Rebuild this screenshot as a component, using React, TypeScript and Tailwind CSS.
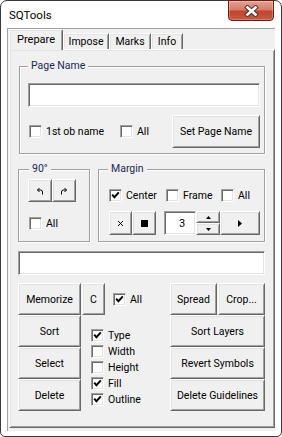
import React from "react";

const raised =
  "bg-[#f0f0f0] border border-t-white border-l-white border-r-[#696969] border-b-[#696969] shadow-[inset_1px_1px_0_#e3e3e3,inset_-1px_-1px_0_#a0a0a0]";
const sunken =
  "bg-white border border-t-[#a0a0a0] border-l-[#a0a0a0] border-r-white border-b-white shadow-[inset_1px_1px_0_#696969,inset_-1px_-1px_0_#e3e3e3]";

function Btn({ className = "", children }: { className?: string; children?: React.ReactNode }) {
  return (
    <div className={`${raised} flex items-center justify-center shrink-0 leading-[13px] ${className}`}>
      {children}
    </div>
  );
}

function Check({ checked = false, label, className = "" }: { checked?: boolean; label: string; className?: string }) {
  return (
    <div className={`flex items-center gap-[4px] h-[13px] shrink-0 ${className}`}>
      <span className={`w-[13px] h-[13px] shrink-0 ${sunken} flex items-center justify-center`}>
        {checked && (
          <svg width="9" height="9" viewBox="0 0 9 9">
            <path d="M1.2 3.6 L3.4 6.2 L7.8 1.4" stroke="#000" strokeWidth="1.9" fill="none" />
          </svg>
        )}
      </span>
      <span className="leading-[13px] whitespace-nowrap">{label}</span>
    </div>
  );
}

function Group({
  label,
  className = "",
  labelClass = "",
  children,
}: {
  label: string;
  className?: string;
  labelClass?: string;
  children?: React.ReactNode;
}) {
  return (
    <div className={`border border-[#a0a0a0] shadow-[inset_1px_1px_0_#fff,1px_1px_0_#fff] shrink-0 ${className}`}>
      <div className={`-mt-[8px] h-[13px] leading-[13px] px-[3px] bg-[#f0f0f0] w-fit text-[#1b2a55] ${labelClass}`}>
        {label}
      </div>
      {children}
    </div>
  );
}

function CloseBtn() {
  return (
    <div className="ml-auto mr-[7px] -mt-[1px] w-[46px] h-[21px] rounded-b-[4px] border border-[#6b1d12] bg-[linear-gradient(180deg,#e6a294_0%,#d67c6a_45%,#c4432e_55%,#c85a43_100%)] flex items-center justify-center shadow-[inset_0_0_0_1px_rgba(255,255,255,0.25)]">
      <svg width="15" height="12" viewBox="0 0 15 12">
        <path d="M3.5 2.5 L11.5 9.5 M11.5 2.5 L3.5 9.5" stroke="#4b3a36" strokeWidth="4.6" strokeLinecap="square" fill="none" />
        <path d="M3.5 2.5 L11.5 9.5 M11.5 2.5 L3.5 9.5" stroke="#ffffff" strokeWidth="2.6" strokeLinecap="square" fill="none" />
      </svg>
    </div>
  );
}

function RotL({ flip = false }: { flip?: boolean }) {
  return (
    <svg width="8" height="8" viewBox="0 0 8 8" style={flip ? { transform: "scaleX(-1)" } : undefined}>
      <path d="M1.5 3 H4.5 Q6.5 3 6.5 5 V7.5" stroke="#000" strokeWidth="1" fill="none" />
      <path d="M3.5 1 L1.5 3 L3.5 5" stroke="#000" strokeWidth="1" fill="none" />
    </svg>
  );
}

export default function App() {
  return (
    <div className="w-[282px] h-[437px] bg-white font-[Roboto,'Liberation_Sans',sans-serif] text-[10.5px] text-black">
      <div className="w-[282px] h-[437px] border border-[#3a3a3a] rounded-t-[7px] rounded-b-[5px] bg-white flex flex-col">
        {/* Title bar */}
        <div className="h-[27px] flex items-start shrink-0">
          <div className="ml-[8px] mt-[6px] text-[11.5px] leading-[16px]">SQTools</div>
          <CloseBtn />
        </div>

        {/* Client */}
        <div className="mx-[6px] h-[403px] shrink-0 bg-[#f0f0f0] border-l border-t border-[#a0a0a0] pl-[1px] pb-[3px] flex flex-col">
          {/* Tabs */}
          <div className="h-[20px] flex items-end shrink-0">
            <div className="relative z-10 -mb-[1px] w-[54px] h-[21px] bg-[#f0f0f0] border-t border-l border-white border-r border-r-[#696969] shadow-[inset_1px_1px_0_#e3e3e3,inset_-1px_0_0_#a0a0a0] rounded-tr-[2px] flex items-start justify-center pt-[3px] leading-[13px] text-[11px]">
              Prepare
            </div>
            <div className="w-[46px] h-[16px] bg-[#f0f0f0] border-t border-l border-white border-r border-r-[#696969] shadow-[inset_1px_1px_0_#e3e3e3,inset_-1px_0_0_#a0a0a0] flex items-start justify-center pt-[1px] leading-[13px]">
              Impose
            </div>
            <div className="w-[42px] h-[16px] bg-[#f0f0f0] border-t border-l border-white border-r border-r-[#696969] shadow-[inset_1px_1px_0_#e3e3e3,inset_-1px_0_0_#a0a0a0] flex items-start justify-center pt-[1px] leading-[13px]">
              Marks
            </div>
            <div className="w-[32px] h-[16px] bg-[#f0f0f0] border-t border-l border-white border-r border-r-[#696969] shadow-[inset_1px_1px_0_#e3e3e3,inset_-1px_0_0_#a0a0a0] flex items-start justify-center pt-[1px] leading-[13px]">
              Info
            </div>
          </div>

          {/* Panel */}
          <div className={`flex-1 ${raised} flex flex-col`}>
            {/* Page Name */}
            <Group label="Page Name" className="mt-[16px] ml-[9px] w-[246px] pb-[5px]" labelClass="ml-[8px]">
              <div className={`mt-[11px] ml-[8px] w-[232px] h-[24px] ${sunken}`} />
              <div className="mt-[8px] ml-[8px] w-[232px] h-[33px] flex items-center">
                <Check label="1st ob name" className="ml-[1px] w-[91px]" />
                <Check label="All" />
                <Btn className="ml-auto w-[88px] h-[33px]">Set Page Name</Btn>
              </div>
            </Group>

            {/* 90 / Margin */}
            <div className="mt-[15px] ml-[8px] flex gap-[8px]">
              <Group label="90°" className="w-[72px] h-[73px]" labelClass="ml-[10px]">
                <div className="mt-[4px] ml-[9px] flex">
                  <Btn className="w-[24px] h-[23px]">
                    <RotL />
                  </Btn>
                  <Btn className="w-[24px] h-[23px]">
                    <RotL flip />
                  </Btn>
                </div>
                <Check label="All" className="mt-[15px] ml-[10px]" />
              </Group>
              <Group label="Margin" className="w-[167px] h-[73px]" labelClass="ml-[9px]">
                <div className="mt-[14px] ml-[10px] flex">
                  <Check checked label="Center" className="w-[57px]" />
                  <Check label="Frame" className="w-[55px]" />
                  <Check label="All" />
                </div>
                <div className="mt-[9px] ml-[10px] flex">
                  <Btn className="w-[23px] h-[24px]">
                    <svg width="7" height="7" viewBox="0 0 7 7">
                      <path d="M1 1 L6 6 M6 1 L1 6" stroke="#000" strokeWidth="1" fill="none" />
                    </svg>
                  </Btn>
                  <Btn className="w-[24px] h-[24px]">
                    <div className="w-[7px] h-[7px] bg-black" />
                  </Btn>
                  <div className={`ml-[8px] w-[32px] h-[24px] ${sunken} flex items-center justify-center pl-[4px] text-[11px] leading-[13px]`}>
                    3
                  </div>
                  <div className="w-[24px] h-[24px] flex flex-col">
                    <Btn className="w-[24px] h-[12px]">
                      <svg width="5" height="3" viewBox="0 0 5 3">
                        <path d="M2.5 0 L5 3 L0 3 Z" fill="#000" />
                      </svg>
                    </Btn>
                    <Btn className="w-[24px] h-[12px]">
                      <svg width="5" height="3" viewBox="0 0 5 3">
                        <path d="M0 0 L5 0 L2.5 3 Z" fill="#000" />
                      </svg>
                    </Btn>
                  </div>
                  <Btn className="w-[40px] h-[24px]">
                    <svg width="4" height="7" viewBox="0 0 4 7">
                      <path d="M0 0 L4 3.5 L0 7 Z" fill="#000" />
                    </svg>
                  </Btn>
                </div>
              </Group>
            </div>

            {/* Text field */}
            <div className={`mt-[9px] ml-[8px] w-[247px] h-[24px] shrink-0 ${sunken}`} />

            {/* Bottom section */}
            <div className="mt-[8px] ml-[8px] flex">
              <div className="w-[63px] flex flex-col">
                <Btn className="w-[63px] h-[32px]">Memorize</Btn>
                <Btn className="w-[63px] h-[32px]">Sort</Btn>
                <Btn className="w-[63px] h-[32px]">Select</Btn>
                <Btn className="w-[63px] h-[32px]">Delete</Btn>
              </div>
              <div className="w-[89px] flex flex-col">
                <div className="h-[32px] flex items-center">
                  <Btn className="ml-[1px] w-[23px] h-[32px]">C</Btn>
                  <Check checked label="All" className="ml-[8px]" />
                </div>
                <div className="mt-[14px] ml-[10px] flex flex-col gap-[3px]">
                  <Check checked label="Type" />
                  <Check label="Width" />
                  <Check label="Height" />
                  <Check checked label="Fill" />
                  <Check checked label="Outline" />
                </div>
              </div>
              <div className="w-[95px] flex flex-col">
                <div className="flex gap-[1px]">
                  <Btn className="w-[47px] h-[32px]">Spread</Btn>
                  <Btn className="w-[47px] h-[32px]">Crop...</Btn>
                </div>
                <Btn className="w-[95px] h-[32px]">Sort Layers</Btn>
                <Btn className="w-[95px] h-[32px]">Revert Symbols</Btn>
                <Btn className="w-[95px] h-[32px]">Delete Guidelines</Btn>
              </div>
            </div>
          </div>
        </div>
      </div>
    </div>
  );
}
